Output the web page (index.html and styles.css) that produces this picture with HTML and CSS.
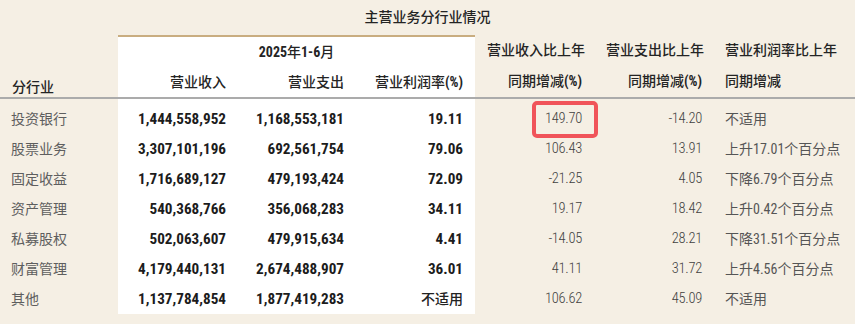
FILE: index.html
```html
<!DOCTYPE html>
<html lang="zh-CN">
<head>
<meta charset="utf-8">
<title>主营业务分行业情况</title>
<link rel="stylesheet" href="styles.css">
</head>
<body>
<table class="seg">
  <colgroup>
    <col class="w118"><col class="w120"><col class="w118"><col class="w119"><col class="w119"><col class="w120"><col class="w141">
  </colgroup>
  <thead>
    <tr class="title"><th colspan="7">主营业务分行业情况</th></tr>
    <tr>
      <th class="h-label" rowspan="2">分行业</th>
      <th class="h-period" colspan="3"><b>2025</b>年<b>1-6</b>月</th>
      <th class="h-yoy" rowspan="2">营业收入比上年<br>同期增减<b>(%)</b></th>
      <th class="h-yoy" rowspan="2">营业支出比上年<br>同期增减<b>(%)</b></th>
      <th class="h-yoy left" rowspan="2">营业利润率比上年<br>同期增减</th>
    </tr>
    <tr>
      <th class="h-sub">营业收入</th>
      <th class="h-sub">营业支出</th>
      <th class="h-sub">营业利润率<b>(%)</b></th>
    </tr>
  </thead>
  <tbody>
    <tr><td class="name">投资银行</td><td class="amt">1,444,558,952</td><td class="amt">1,168,553,181</td><td class="amt">19.11</td><td class="chg hl">149.70<span class="mark"></span></td><td class="chg">-14.20</td><td class="note">不适用</td></tr>
    <tr><td class="name">股票业务</td><td class="amt">3,307,101,196</td><td class="amt">692,561,754</td><td class="amt">79.06</td><td class="chg">106.43</td><td class="chg">13.91</td><td class="note">上升17.01个百分点</td></tr>
    <tr><td class="name">固定收益</td><td class="amt">1,716,689,127</td><td class="amt">479,193,424</td><td class="amt">72.09</td><td class="chg">-21.25</td><td class="chg">4.05</td><td class="note">下降6.79个百分点</td></tr>
    <tr><td class="name">资产管理</td><td class="amt">540,368,766</td><td class="amt">356,068,283</td><td class="amt">34.11</td><td class="chg">19.17</td><td class="chg">18.42</td><td class="note">上升0.42个百分点</td></tr>
    <tr><td class="name">私募股权</td><td class="amt">502,063,607</td><td class="amt">479,915,634</td><td class="amt">4.41</td><td class="chg">-14.05</td><td class="chg">28.21</td><td class="note">下降31.51个百分点</td></tr>
    <tr><td class="name">财富管理</td><td class="amt">4,179,440,131</td><td class="amt">2,674,488,907</td><td class="amt">36.01</td><td class="chg">41.11</td><td class="chg">31.72</td><td class="note">上升4.56个百分点</td></tr>
    <tr><td class="name">其他</td><td class="amt">1,137,784,854</td><td class="amt">1,877,419,283</td><td class="amt na">不适用</td><td class="chg">106.62</td><td class="chg">45.09</td><td class="note">不适用</td></tr>
  </tbody>
</table>
</body>
</html>
```

FILE: styles.css
```css
html, body {
  margin: 0;
  padding: 0;
}
body {
  background: #f5efe4;
  font-family: "Roboto Condensed", Roboto, "Noto Sans CJK SC", sans-serif;
  font-stretch: condensed;
  color: #222;
}
.seg {
  border-collapse: separate;
  border-spacing: 0;
  width: 855px;
  table-layout: fixed;
}
.w118 { width: 118px; }
.w119 { width: 119px; }
.w120 { width: 120px; }
.w141 { width: 141px; }

.seg th,
.seg td {
  padding: 0 12px;
  white-space: nowrap;
  font-size: 14px;
}
.seg th {
  font-weight: 500;
  color: #242424;
  text-align: right;
}
.seg th b {
  font-weight: 700;
}
.title th {
  line-height: 35px;
  padding: 0;
  text-align: center;
}
.h-label {
  vertical-align: bottom;
  line-height: 20px;
  padding: 0 0 9px 11px;
  border-bottom: 2px solid #ababab;
}
.seg .h-label { text-align: left; }
.h-period {
  background: #fff;
  border-top: 2px solid #c9ad80;
  line-height: 20px;
  padding: 8px 12px 6px;
}
.seg .h-period { text-align: center; }
.h-sub {
  background: #fff;
  line-height: 20px;
  padding: 5px 12px 9px;
  border-bottom: 2px solid #ababab;
}
.h-yoy {
  vertical-align: top;
  line-height: 31px;
  padding: 5px 12px 0;
  border-bottom: 2px solid #ababab;
}
.seg .h-yoy.left {
  text-align: left;
  padding-left: 11px;
}

.seg tbody td {
  line-height: 30px;
}
.seg tbody tr:first-child td {
  padding-top: 5px;
}
.name {
  color: #5e5e5e;
  text-align: left;
}
.seg td.name { padding-left: 11px; }
.amt {
  background: #fff;
  text-align: right;
  font-weight: 700;
  color: #1c1c1c;
}
.seg td.amt { font-size: 15.2px; }
.seg td.na {
  font-size: 14px;
  font-weight: 500;
  color: #222;
}
.chg {
  text-align: right;
  color: #3f3f3f;
  font-weight: 300;
  letter-spacing: -0.3px;
}
.seg td.chg { font-size: 14.5px; }
.note {
  text-align: left;
  color: #555;
}
.seg td.note { padding-left: 11px; }

.hl {
  position: relative;
}
.mark {
  position: absolute;
  left: 57px;
  top: 2px;
  width: 66px;
  height: 37px;
  box-sizing: border-box;
  border: 4px solid #f0545a;
  border-radius: 5px;
  letter-spacing: 0;
}
```
